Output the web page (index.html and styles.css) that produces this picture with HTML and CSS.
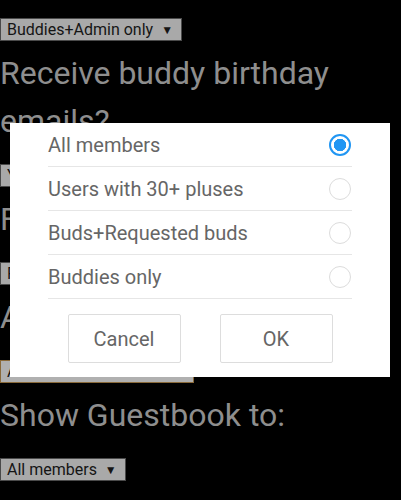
FILE: index.html
```html
<!DOCTYPE html>
<html>
<head>
<meta charset="utf-8" />
<title>Privacy settings</title>
<link rel="stylesheet" href="styles.css">
</head>
<body>
<div class="settings">
	<span class="pick">Buddies+Admin only <i class="arrow">&#9660;</i></span>
	<h2 class="label">Receive buddy birthday emails?</h2>
	<span class="pick">Yes <i class="arrow">&#9660;</i></span>
	<h2 class="label">Friend requests from:</h2>
	<span class="pick">Friends only <i class="arrow">&#9660;</i></span>
	<h2 class="label">Allow comments from:</h2>
	<span class="pick pick_focus">All members <i class="arrow">&#9660;</i></span>
	<h2 class="label">Show Guestbook to:</h2>
	<span class="pick">All members <i class="arrow">&#9660;</i></span>
</div>

<div class="dialog">
	<ul class="choices">
		<li class="choice">All members<span class="radio radio_on"></span></li>
		<li class="choice">Users with 30+ pluses<span class="radio"></span></li>
		<li class="choice">Buds+Requested buds<span class="radio"></span></li>
		<li class="choice">Buddies only<span class="radio"></span></li>
	</ul>
	<div class="buttons">
		<button class="btn">Cancel</button>
		<button class="btn">OK</button>
	</div>
</div>
</body>
</html>
```

FILE: styles.css
```css
html,body{margin:0;padding:0;background:#000;}
body{font:normal 16px/1.2 Roboto, "Noto Sans", sans-serif;}
.settings{padding-top:18px;}
.pick{display:block;width:max-content;height:23px;box-sizing:border-box;padding:0 8px 0 6px;line-height:21px;font-size:16px;color:#151515;background:#a9a9a9;border:1px solid #4a4a4a;}
.pick_focus{border-color:#8a6a3a;width:194px;background:#b0b0b0;}
.arrow{font-style:normal;font-size:12px;margin-left:4px;vertical-align:1px;}
.label{margin:8px 0 19px;font-size:32px;line-height:48px;font-weight:normal;color:#8e8e8e;}

.dialog{position:absolute;left:10px;top:123px;width:380px;height:254px;background:#fff;}
.choices{list-style:none;margin:0 38px;padding:0;}
.choice{display:flex;align-items:center;justify-content:space-between;height:43px;border-bottom:1px solid #e6e6e6;font-size:20px;color:#666;}
.radio{width:22px;height:22px;box-sizing:border-box;margin-right:1px;border:1.5px solid #dcdcdc;border-radius:50%;}
.radio_on{border:2.5px solid #2196f3;background:radial-gradient(circle,#2196f3 0,#2196f3 6px,#fff 6.5px);}
.buttons{display:flex;justify-content:center;gap:39px;margin-top:15px;}
.btn{width:113px;height:49px;background:#fff;border:1px solid #ddd;border-radius:2px;font:normal 20px Roboto, "Noto Sans", sans-serif;color:#666;padding:0;}
```
